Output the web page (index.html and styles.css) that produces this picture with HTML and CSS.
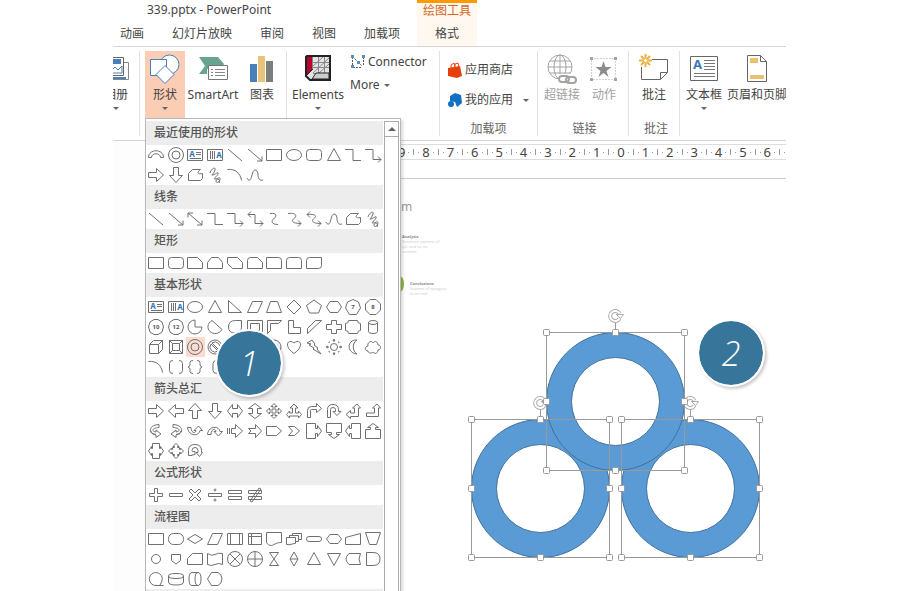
FILE: index.html
```html
<!DOCTYPE html>
<html lang="zh-CN">
<head>
    <meta charset="UTF-8">
    <meta name="viewport" content="width=device-width, initial-scale=1.0">
    <title>339.pptx - PowerPoint</title>
    <link rel="stylesheet" href="styles.css">
</head>
<body>
    <div class="app-window">
        <header class="title-bar">
            <div class="title-main">
                <h1>339.pptx - PowerPoint</h1>
                <nav class="tabs">
                    <button type="button">动画</button>
                    <button type="button">幻灯片放映</button>
                    <button type="button">审阅</button>
                    <button type="button">视图</button>
                    <button type="button">加载项</button>
                </nav>
            </div>
            <div class="context-tab">
                <span>绘图工具</span>
                <button type="button">格式</button>
            </div>
        </header>

        <section class="ribbon">
            <div class="group group-album">
                <div class="items">
                    <button type="button" class="tool">
                        <svg width="30" height="30" viewBox="0 0 30 30">
                            <path d="M9 8.500h18.500v17H9" fill="#fff" stroke="#888"/>
                            <path d="M6 3.500h16.500v18H6" fill="#fff" stroke="#666"/>
                            <path d="M8 5h12v5H8z" fill="#4a80b8"/>
                            <path d="M8 19l6-6 3 3 4-4v7z" fill="#fff" stroke="#4a80b8"/>
                            <path d="M9 24h16" stroke="#4a80b8" stroke-width="2"/>
                        </svg>
                        <span>相册</span>
                        <i class="caret"></i>
                    </button>
                </div>
            </div>

            <div class="group group-shapes">
                <div class="items">
                    <button type="button" class="tool active">
                        <svg width="30" height="30" viewBox="0 0 30 30">
                            <g fill="#fff" stroke="#4a80b8">
                                <circle cx="19.500" cy="10.500" r="9.500"/>
                                <path d="M.5 5.500h16v16H.5z"/>
                                <path d="M15 11.500l9 9-9 9-9-9z"/>
                            </g>
                        </svg>
                        <span>形状</span>
                        <i class="caret"></i>
                    </button>
                    <button type="button" class="tool wide">
                        <svg width="30" height="30" viewBox="0 0 30 30">
                            <path d="M1 3h19l6 7-3 5H9v5H1l6-8z" fill="#68a490"/>
                            <path d="M10.500 11.500h19v14h-19z" fill="#fff" stroke="#777"/>
                            <path d="M13 15.500h2m2 0h10M13 18.500h2m2 0h10M13 21.500h2m2 0h10" stroke="#888"/>
                        </svg>
                        <span>SmartArt</span>
                    </button>
                    <button type="button" class="tool">
                        <svg width="30" height="30" viewBox="0 0 30 30">
                            <path d="M3 10h7v18H3z" fill="#4a80b8"/>
                            <path d="M11 2h7v26h-7z" fill="#e9c27b"/>
                            <path d="M19 7h7v21h-7z" fill="#7a7e7b"/>
                        </svg>
                        <span>图表</span>
                    </button>
                </div>
            </div>

            <div class="group group-elements">
                <div class="items">
                    <button type="button" class="tool wide">
                        <svg width="30" height="30" viewBox="0 0 30 30">
                            <path d="M4 2h23v24H7l-4-4V3z" fill="#e4e4e4" stroke="#222" stroke-width="2"/>
                            <path d="M4 3h5v13l-5 5z" fill="#b8002f"/>
                            <path d="M9.500 3v13M15.500 3v16M21.500 3v16M9 8.500h17M9 13.500h17M10 19.500h16M9 13l11-10M10 19l16-15M16 19l10-9" fill="none" stroke="#888"/>
                            <path d="M9 25l4-6h13v6z" fill="#ccc" stroke="#222"/>
                            <path d="M4 21l6-6" stroke="#222"/>
                        </svg>
                        <span>Elements</span>
                        <i class="caret"></i>
                    </button>
                    <div class="stack latin">
                        <button type="button">
                            <svg width="16" height="16" viewBox="0 0 16 16">
                                <path d="M2.500 3v9M3 13.500h9M13.500 3v9M3 3l9 9" fill="none" stroke="#555" stroke-dasharray="2 1"/>
                                <path d="M1 1h3v3H1zM12 1h3v3h-3zM1 11h3v3H1zM7 7h3v3H7z" fill="#5b8fc0"/>
                            </svg>
                            Connector
                        </button>
                        <button type="button">More <i class="caret"></i></button>
                    </div>
                </div>
            </div>

            <div class="group group-addins">
                <div class="items">
                    <div class="stack">
                        <button type="button">
                            <svg width="16" height="16" viewBox="0 0 16 16">
                                <path d="M1 6l12-2 2 10-5 2-9-2z" fill="#e8400c"/>
                                <path d="M4 6V3l3-2 1 4V2l3-1 1 4" fill="none" stroke="#e8400c"/>
                            </svg>
                            应用商店
                        </button>
                        <button type="button">
                            <svg width="16" height="16" viewBox="0 0 16 16">
                                <path d="M3 4l5-3 6 2 1 8-5 4-2-5-5-1z" fill="#0f70c4"/>
                                <circle cx="4" cy="12" r="3" fill="#0f70c4"/>
                            </svg>
                            我的应用
                            <i class="caret"></i>
                        </button>
                    </div>
                </div>
                <div class="group-label">加载项</div>
            </div>

            <div class="group group-links">
                <div class="items">
                    <button type="button" class="tool" disabled>
                        <svg width="30" height="30" viewBox="0 0 30 30">
                            <g fill="none" stroke="#a3a3a3">
                                <circle cx="13" cy="13" r="12"/>
                                <ellipse cx="13" cy="13" rx="6" ry="12"/>
                                <path d="M13 1v24M1 13h24M3 7h20M3 19h20"/>
                            </g>
                            <path d="M11 20h19v10H11z" fill="#fff"/>
                            <g fill="none" stroke="#a3a3a3" stroke-width="2">
                                <rect x="12" y="22" width="10" height="6" rx="3"/>
                                <rect x="19" y="23" width="10" height="6" rx="3"/>
                            </g>
                        </svg>
                        <span>超链接</span>
                    </button>
                    <button type="button" class="tool" disabled>
                        <svg width="30" height="30" viewBox="0 0 30 30">
                            <path d="M2.500 4.500h24v21h-24z" fill="none" stroke="#a3a3a3" stroke-dasharray="1 2"/>
                            <path d="M1 3h3v3H1zM25 3h3v3h-3zM1 24h3v3H1zM25 24h3v3h-3z" fill="#a3a3a3"/>
                            <path d="M14.500 7l2 6h6l-5 4 2 6-5-4-5 4 2-6-5-4h6z" fill="#8c8c8c"/>
                        </svg>
                        <span>动作</span>
                    </button>
                </div>
                <div class="group-label">链接</div>
            </div>

            <div class="group group-comments">
                <div class="items">
                    <button type="button" class="tool">
                        <svg width="30" height="30" viewBox="0 0 30 30">
                            <path d="M2.500 13v12.500h19l7-7v-13H13" fill="none" stroke="#666"/>
                            <path d="M21.500 25.500v-7h7" fill="none" stroke="#666"/>
                            <path d="M6.500 0v4m0 5v4M0 6.500h4m5 0h4M2 2l3 3m3 3l3 3m0-9L8 5M5 8l-3 3" stroke="#ecb23f" stroke-width="2"/>
                            <circle cx="6.500" cy="6.500" r="2" fill="#fff" stroke="#ecb23f"/>
                        </svg>
                        <span>批注</span>
                    </button>
                </div>
                <div class="group-label">批注</div>
            </div>

            <div class="group group-text">
                <div class="items">
                    <button type="button" class="tool">
                        <svg width="30" height="30" viewBox="0 0 30 30">
                            <path d="M1.500 2.500h27v24h-27z" fill="#fff" stroke="#666"/>
                            <text x="4" y="15" class="glyph-letter">A</text>
                            <path d="M15 6.500h11M15 9.500h11M15 12.500h11M15 15.500h11M5 19.500h21M5 22.500h21" stroke="#777"/>
                        </svg>
                        <span>文本框</span>
                        <i class="caret"></i>
                    </button>
                    <button type="button" class="tool header-footer">
                        <svg width="30" height="30" viewBox="0 0 30 30">
                            <path d="M5.500 1.500h13l6 6v20h-19z" fill="#fff" stroke="#666"/>
                            <path d="M18.500 1.500v6h6" fill="none" stroke="#666"/>
                            <path d="M8 4h8v5H8zM8 21h14v4H8z" fill="#ecc06f"/>
                        </svg>
                        <span>页眉和页脚</span>
                    </button>
                </div>
            </div>
        </section>

        <div class="ruler">
            <span>9</span><i></i><span>8</span><i></i><span>7</span><i></i><span>6</span><i></i>
            <span>5</span><i></i><span>4</span><i></i><span>3</span><i></i><span>2</span><i></i>
            <span>1</span><i></i><span>0</span><i></i><span>1</span><i></i><span>2</span><i></i>
            <span>3</span><i></i><span>4</span><i></i><span>5</span><i></i><span>6</span><i></i>
        </div>

        <main class="workspace">
            <div class="thumbnails"></div>
            <div class="slide">
                <p class="slide-title">m</p>
                <div class="slide-note note-analysis">
                    <b>Analysis</b>
                    <p>Sentence pattern of<br>tpl. and so on<br>content</p>
                </div>
                <div class="slide-note note-conclusions">
                    <b>Conclusions</b>
                    <p>Subtext of category<br>in an text</p>
                </div>
                <span class="slide-dot"></span>

                <svg class="drawing" width="300" height="262" viewBox="465 300 300 262">
                    <defs>
                        <path id="ring" fill-rule="evenodd" d="M-69 0a69 69 0 1 1 138 0a69 69 0 1 1-138 0zM-44 0a44 44 0 1 0 88 0a44 44 0 1 0-88 0z"/>
                        <g id="selection">
                            <path d="M-69-69H69V69H-69zM0-69V-81" fill="none" stroke="#999"/>
                            <g fill="#fff" stroke="#999">
                                <rect x="-72" y="-72" width="6" height="6" rx="1"/>
                                <rect x="-3" y="-72" width="6" height="6" rx="1"/>
                                <rect x="66" y="-72" width="6" height="6" rx="1"/>
                                <rect x="-72" y="-3" width="6" height="6" rx="1"/>
                                <rect x="66" y="-3" width="6" height="6" rx="1"/>
                                <rect x="-72" y="66" width="6" height="6" rx="1"/>
                                <rect x="-3" y="66" width="6" height="6" rx="1"/>
                                <rect x="66" y="66" width="6" height="6" rx="1"/>
                            </g>
                            <path d="M4-83A5 5 0 1 1 4-88" fill="none" stroke="#aaa" stroke-width="4"/>
                            <path d="M4-83A5 5 0 1 1 4-88" fill="none" stroke="#fff" stroke-width="2"/>
                            <path d="M1-87h7l-3 4z" fill="#fff" stroke="#aaa"/>
                        </g>
                    </defs>
                    <g fill="#5b9bd5" stroke="#41719c">
                        <use href="#ring" x="540.500" y="488.500"/>
                        <use href="#ring" x="690.500" y="488.500"/>
                        <use href="#ring" x="615.500" y="401.500"/>
                    </g>
                    <use href="#selection" x="540.500" y="488.500"/>
                    <use href="#selection" x="690.500" y="488.500"/>
                    <use href="#selection" x="615.500" y="401.500"/>
                </svg>
            </div>
        </main>

        <div class="shape-menu">
            <div class="gallery" id="gallery"></div>
            <div class="scrollbar">
                <button type="button" aria-label="向上滚动"></button>
            </div>
        </div>

        <span class="step step-one">1</span>
        <span class="step step-two">2</span>
    </div>

    <script src="gallery.js"></script>
</body>
</html>
```

FILE: styles.css
```css
/* General Styles */
* {
    box-sizing: border-box;
}

body {
    margin: 0;
    background: #fff;
    color: #444;
    font-family: "Noto Sans", "Noto Sans CJK SC", sans-serif;
    font-size: 12px;
    line-height: 16px;
}

button {
    margin: 0;
    padding: 0;
    border: none;
    background: none;
    color: inherit;
    font: inherit;
    white-space: nowrap;
}

h1, h2, p {
    margin: 0;
    font-weight: normal;
}

.app-window {
    position: relative;
    display: flex;
    flex-direction: column;
    height: 100vh;
    margin: 0 114px 0 113px;
    overflow: hidden;
}

/* Title and tabs */
.title-bar {
    display: flex;
    height: 47px;
    border-bottom: 1px solid #d4d4d4;
}

.title-main {
    width: 304px;
}

.title-main h1 {
    padding: 2px 0 0 34px;
    font-size: 12px;
    line-height: 16px;
}

.tabs {
    display: flex;
    gap: 28px;
    padding: 8px 0 0 7px;
}

.context-tab {
    display: flex;
    flex-direction: column;
    align-items: center;
    gap: 7px;
    width: 60px;
    border-top: 3px solid #f90;
    background: #fef8f0;
}

.context-tab span {
    color: #d2691e;
}

/* Ribbon */
.ribbon {
    display: flex;
    height: 94px;
    padding: 4px 0;
    border-bottom: 1px solid #d4d4d4;
}

.group {
    display: flex;
    flex: none;
    flex-direction: column;
    justify-content: space-between;
    border-right: 1px solid #e1e1e1;
}

.items {
    display: flex;
}

.group-label {
    color: #666;
    text-align: center;
    line-height: 14px;
}

.group-album {
    width: 27px;
    overflow: hidden;
}

.group-album .items {
    justify-content: flex-end;
    padding-right: 2px;
}

.group-shapes {
    width: 147px;
    padding-left: 5px;
}

.group-elements {
    width: 153px;
    padding-left: 3px;
}

.group-addins {
    width: 98px;
}

.group-links {
    width: 91px;
    padding-left: 3px;
}

.group-comments {
    width: 51px;
    padding-left: 4px;
}

.group-text {
    flex: 1;
    min-width: 0;
    padding-left: 3px;
    border-right: none;
    overflow: hidden;
}

.tool {
    display: flex;
    flex: none;
    flex-direction: column;
    align-items: center;
    width: 42px;
    height: 67px;
    padding-top: 3px;
}

.tool span {
    margin-top: 3px;
}

.tool .caret {
    margin-top: 4px;
}

.tool.wide {
    width: 56px;
}

.tool.active {
    width: 40px;
    background: #fccdb5;
}

.tool.header-footer {
    width: 64px;
}

.tool:disabled {
    color: #a0a0a0;
}

.caret {
    display: inline-block;
    border: 3px solid transparent;
    border-top-color: #666;
    border-bottom: none;
}

.stack {
    display: flex;
    flex-direction: column;
    gap: 14px;
    padding: 11px 0 0 7px;
}

.stack button {
    display: flex;
    align-items: center;
    gap: 2px;
}

.stack .caret {
    margin-left: 8px;
}

.stack.latin {
    gap: 7px;
    padding: 3px 0 0 4px;
}

.stack.latin .caret {
    margin-left: 2px;
}

.glyph-letter {
    fill: #3a78b8;
    font-size: 13px;
    font-weight: bold;
}

/* Ruler */
.ruler {
    display: flex;
    align-items: center;
    height: 16px;
    margin-top: 3px;
    padding-left: 283px;
    border-top: 1px solid #ddd;
    border-bottom: 1px solid #ddd;
    font-size: 13px;
    line-height: 14px;
}

.ruler span {
    flex: 1;
    text-align: center;
}

.ruler i {
    flex: none;
    width: 13px;
    height: 6px;
    background:
        linear-gradient(#999, #999) 6px 0 / 1px 6px no-repeat,
        linear-gradient(#999, #999) 1px 3px / 1px 1px no-repeat,
        linear-gradient(#999, #999) 11px 3px / 1px 1px no-repeat;
}

/* Workspace */
.workspace {
    display: flex;
    flex: 1;
    margin-top: 18px;
}

.thumbnails {
    width: 32px;
    margin-top: -37px;
    background: #fdfdfd;
}

.slide {
    position: relative;
    flex: 1;
    border-top: 1px solid #ccc;
}

.slide-title {
    position: absolute;
    top: 20px;
    left: 256px;
    color: #999;
}

.slide-note {
    position: absolute;
    color: #ccc;
    font-size: 4px;
    line-height: 5px;
}

.slide-note b {
    color: #888;
}

.note-analysis {
    top: 55px;
    left: 257px;
}

.note-conclusions {
    top: 102px;
    left: 265px;
}

.slide-dot {
    position: absolute;
    top: 97px;
    left: 250px;
    width: 9px;
    height: 16px;
    border-radius: 50%;
    background: #8db844;
}

.drawing {
    position: absolute;
    top: 121px;
    left: 320px;
}

/* Shape menu */
.shape-menu {
    position: absolute;
    top: 118px;
    bottom: 0;
    left: 32px;
    display: flex;
    width: 256px;
    padding: 2px 1px 0 0;
    border: 1px solid #b8b8b8;
    border-bottom: none;
    background: #fff;
    box-shadow: 2px 2px 3px rgba(0, 0, 0, 0.15);
    overflow: hidden;
}

.gallery {
    flex: 1;
}

.gallery::after {
    content: "";
    display: block;
    height: 24px;
    background: #ededed;
}

.gallery h2 {
    height: 24px;
    padding-left: 8px;
    background: #ededed;
    color: #555;
    font-size: 12px;
    font-weight: 500;
    line-height: 24px;
}

.shape-grid {
    display: grid;
    grid-template-columns: repeat(12, 1fr);
}

.shape-grid button {
    display: flex;
    align-items: center;
    justify-content: center;
    height: 20px;
}

.shape-grid .selected {
    background: #fcdcd0;
}

.shape-grid svg {
    fill: none;
    stroke: #707070;
}

.shape-grid text {
    fill: #555;
    stroke: none;
    font-size: 6px;
    font-weight: bold;
    text-anchor: middle;
}

.shape-grid .blue {
    fill: #2e75b6;
    font-size: 8px;
}

.scrollbar {
    width: 15px;
    margin-left: 1px;
    border: 1px solid #aaa;
    border-bottom: none;
}

.scrollbar button {
    display: flex;
    align-items: center;
    justify-content: center;
    width: 100%;
    height: 15px;
    border-bottom: 1px solid #aaa;
}

.scrollbar button::before {
    content: "";
    border: 4px solid transparent;
    border-top: none;
    border-bottom-color: #666;
}

/* Step badges */
.step {
    position: absolute;
    width: 68px;
    height: 68px;
    border: 2px solid #fff;
    border-radius: 50%;
    background: #37759b padding-box;
    box-shadow: 2px 2px 3px rgba(0, 0, 0, 0.2);
    color: #fff;
    font-family: "Open Sans", sans-serif;
    font-size: 34px;
    font-style: italic;
    font-weight: 300;
    line-height: 64px;
    text-align: center;
}

.step-one {
    top: 329px;
    left: 102px;
}

.step-two {
    top: 319px;
    left: 584px;
}
```

FILE: gallery.js
```js
const path = (d) => `<path d="${d}"/>`;

// every icon is drawn on an 18 x 18 grid
const icons = {
    // lines
    line: path("M2 3l14 12"),
    arrow: path("M2 3l14 12M16 10.500V15h-5"),
    doubleArrow: path("M2 3l14 12M16 10.500V15h-5M2 7.500V3h5"),
    elbow: path("M1 3.500h8v11h8"),
    elbowArrow: path("M1 3.500h8v10h8M14 10.500l3 3-3 3"),
    elbowDouble: path("M2 4.500h7v9h8M14 10.500l3 3-3 3M5 1.500l-3 3 3 3"),
    curveLine: path("M5 3.500c7-1 7 3 4 5s-3 6 4 6"),
    curveArrow: path("M3 3.500c9-1 9 3 6 5s-2 5 7 5M13 10.500l3 3-3 3"),
    curveDouble: path("M2 4.500c9-1 10 2 7 4s-2 5 7 5M13 10.500l3 3-3 3M5 1.500l-3 3 3 3"),
    curve: path("M1 12c2 4 4 2 5-3 1-6 5-7 6-1 0 5 2 7 5 6"),
    freeform: path("M2.500 14.500v-7l4-4h8c-4 3-3 5 2 4v5l-2 2z"),
    scribble: path("M4 7c1-4 6-7 5-3s-5 6-2 5 6-4 5-1-6 5-3 5 5-3 5 0-4 5-4 2 5-2 3 2"),
    arc: path("M1.500 3.500c8-1 13 4 14 11"),

    // rectangles
    rect: path("M1.500 3.500h15v11h-15z"),
    roundRect: '<rect x="1.500" y="3.500" width="15" height="11" rx="3"/>',
    snipOne: path("M1.500 3.500h10l5 5v6h-15z"),
    snipTwo: path("M1.500 14.500v-6l4-5h7l4 5v6z"),
    snipDiagonal: path("M1.500 3.500h10l5 5v6h-10l-5-5z"),
    snipRound: path("M1.500 14.500v-8q0-3 3-3h7l5 5v6z"),
    roundOne: path("M1.500 3.500h12q3 0 3 3v8h-15z"),
    roundTwo: path("M1.500 14.500v-8q0-3 3-3h9q3 0 3 3v8z"),
    roundDiagonal: path("M4.500 3.500h12v8q0 3-3 3h-12v-8q0-3 3-3z"),

    // basic shapes
    textBox: path("M1.500 3.500h15v11h-15zM10 6.500h5M10 8.500h5M4 12.500h11") + '<text class="blue" x="6" y="11">A</text>',
    textBoxVertical: path("M1.500 3.500h15v11h-15zM4.500 5v8M6.500 5v8M8.500 5v8") + '<text class="blue" x="13" y="12">A</text>',
    oval: '<ellipse cx="9" cy="9" rx="7.500" ry="5.500"/>',
    triangle: path("M9 2.500l6.500 12h-13z"),
    rightTriangle: path("M2.500 2.500l13 12h-13z"),
    parallelogram: path("M6.500 3.500h10l-5 11h-10z"),
    trapezoid: path("M5.500 3.500h7l4 11h-15z"),
    diamond: path("M9 2l7 7-7 7-7-7z"),
    pentagon: path("M9 2l7.500 5.500-3 7.500h-9l-3-7.500z"),
    hexagon: path("M5 3.500h8l3.500 5.500-3.500 5.500H5L1.500 9z"),
    heptagon: path("M9 1.500l5.500 2.500 2 6-4 6.500h-7l-4-6.500 2-6z") + '<text x="9" y="11">7</text>',
    octagon: path("M6 1.500h6L16.500 6v6L12 16.500H6L1.500 12V6z") + '<text x="9" y="11">8</text>',
    decagon: path("M7 1.500h4l4 2.500 1.500 5-1.500 5-4 2.500H7L3 14 1.500 9 3 4z") + '<text x="9" y="11">10</text>',
    dodecagon: path("M7 1.500h4l4 2.500 1.500 5-1.500 5-4 2.500H7L3 14 1.500 9 3 4z") + '<text x="9" y="11">12</text>',
    pie: path("M9 2a7 7 0 1 0 7 7H9z"),
    chord: path("M6 2.500l10 9c-3 5-9 5-12 2s-3-8 2-11z"),
    teardrop: path("M2.500 9q0-6.500 7-6.500h6V9q0 6-6.500 6T2.500 9z"),
    frame: path("M1.500 2.500h15v13h-15zM4.500 5.500h9v7h-9z"),
    halfFrame: path("M2.500 2.500h14l-3 3h-8v7l-3 3z"),
    lShape: path("M3.500 2.500h5v7h7v6h-12z"),
    stripe: path("M2.500 10.500l8-8h6l-14 13z"),
    cross: path("M6.500 2.500h5v4h5v5h-5v4h-5v-4h-5v-5h5z"),
    plaque: path("M4.500 2.500h9q0 3 3 3v7q-3 0-3 3h-9q0-3-3-3v-7q3 0 3-3z"),
    can: path("M4.500 4.500v9q0 2 4.500 2t4.500-2v-9q0-2-4.500-2t-4.500 2q0 2 4.500 2t4.500-2"),
    cube: path("M2.500 6.500h9v9h-9zM2.500 6.500l4-4h9v9l-4 4M11.500 6.500l4-4"),
    bevel: path("M2.500 2.500h13v13h-13zM5.500 5.500h7v7h-7zM2.500 2.500l3 3M15.500 2.500l-3 3M2.500 15.500l3-3M15.500 15.500l-3-3"),
    donut: '<circle cx="9" cy="9" r="7.500"/><circle cx="9" cy="9" r="4"/>',
    noSymbol: '<circle cx="9" cy="9" r="7"/>' + path("M6 5a5 5 0 0 1 7 7zM5 6a5 5 0 0 0 7 7z"),
    blockArc: path("M1.500 11.500c0-9 15-9 15 0h-3c0-5-9-5-9 0z"),
    folded: path("M2.500 2.500h13v9l-4 4h-9zM11.500 15.500v-4h4"),
    smiley: '<circle cx="9" cy="9" r="7"/>' + path("M5 11q4 4 8 0M6 6v1M12 6v1"),
    heart: path("M9 15.500C-2 8 3 0 9 5c6-5 11 3 0 10.500z"),
    bolt: path("M2 5l5-3 3 4-1 1 4 3-1 1 4 5-8-5 1-1-5-3 2-1z"),
    sun: '<circle cx="9" cy="9" r="3.500"/>' + path("M8 3l1-2 1 2zM8 15l1 2 1-2zM3 8L1 9l2 1zM15 8l2 1-2 1zM4 5V4h1M13 4h1v1M4 13v1h1M14 13v1h-1"),
    moon: path("M13 2C3 1 2 15 13 16 8 13 8 5 13 2z"),
    cloud: path("M4 13c-4 0-3-5 0-5-1-4 4-6 5-3 2-3 5-1 5 2 4 0 3 5 0 5 0 4-4 4-5 2-2 2-5 1-5-1z"),
    brackets: path("M6 2.500q-3.500 0-3.500 3v7q0 3 3.500 3M12 2.500q3.500 0 3.500 3v7q0 3-3.500 3"),
    braces: path("M7 2.500q-3 0-3 2v2q0 2-2 2.500q2 .5 2 2.500v2q0 2 3 2M11 2.500q3 0 3 2v2q0 2 2 2.500q-2 .5-2 2.500v2q0 2-3 2"),
    bracket: path("M11 2.500q-4 0-4 3v7q0 3 4 3"),

    // block arrows
    right: path("M1.500 6.500h8v-4L16.500 9l-7 6.500v-4h-8z"),
    left: path("M16.500 6.500h-8v-4L1.500 9l7 6.500v-4h8z"),
    up: path("M6.500 16.500v-8h-4L9 1.500l6.500 7h-4v8z"),
    down: path("M6.500 1.500v8h-4L9 16.500l6.500-7h-4v-8z"),
    leftRight: path("M1.500 9L6.500 2.500v4h5v-4L16.500 9l-5 6.500v-4h-5v4z"),
    upDown: path("M9 1.500l6.500 5h-4v5h4L9 16.500l-6.500-5h4v-5h-4z"),
    quad: path("M9 1.500l3 3h-2v3.500h3.500V6l3 3-3 3v-2H10v3.500h2l-3 3-3-3h2V10H4.500v2l-3-3 3-3v2H8V4.500H6z"),
    leftRightUp: path("M9 2l4 4h-2.500v5h3v-2l3 3.500-3 3.500v-2h-9v2l-3-3.500 3-3.500v2h3V6H5z"),
    bent: path("M2.500 15.500v-7q0-4 4-4h5v-3l5 5-5 4v-3h-5q-1 0-1 1v7z"),
    uTurn: path("M2.500 15.500v-8q0-5 5.500-5t5.500 5v2h2.500l-4 4-4-4h2.500v-2q0-2-2.500-2t-2.500 2v8z"),
    leftUp: path("M13 2l3.500 4h-2v8.500h-8v2L2 12.500l4.500-4v2.500h4V6h-2z"),
    bentUp: path("M13 2l3.500 4h-2v8.500h-12v-3.500h8V6h-2z"),
    curvedRight: path("M12 2.500C1 3 1 12 9 13v2.500l5-3.500-5-4v2C4 9 5 6 12 5.500zM3.500 8.500q1 4 5.500 4"),
    curvedLeft: path("M6 2.500C17 3 17 12 9 13v2.500L4 12l5-4v2c5-1 4-4-3-4.500zM14.500 8.500q-1 4-5.500 4"),
    curvedUp: path("M1.500 5.500C2 14 13 15 14 8.500h2.500L12.500 4 8 8.500h2c-1 4-5 2-5-3z"),
    curvedDown: path("M1.500 12.500C2 4 13 3 14 9.500h2.500L12.500 14 8 9.500h2c-1-4-5-2-5 3z"),
    striped: path("M1.500 6v6M3.500 6v6M5.500 6.500h4v-4L16.500 9l-7 6.500v-4h-4z"),
    notched: path("M2.500 6.500h7v-4l6 6.500-6 6.500v-4h-7L5 9z"),
    homePlate: path("M1.500 4.500h10L16.500 9l-5 4.500h-10z"),
    chevron: path("M3.500 4.500h6l5 4.500-5 4.500h-6l4-4.500z"),
    calloutRight: path("M1.500 1.500h9v5h2v-3L16.500 9l-4 5.500v-3h-2v5h-9z"),
    calloutDown: path("M1.500 1.500h15v9h-5v2h3L9 16.500l-5.500-4h3v-2h-5z"),
    calloutLeft: path("M16.500 1.500h-9v5h-2v-3L1.500 9l4 5.500v-3h2v5h9z"),
    calloutUp: path("M1.500 16.500h15v-9h-5v-2h3L9 1.500l-5.500 4h3v2h-5z"),
    calloutSides: path("M5.500 1.500h7v5h1v-2L16.500 9l-3 4.500v-2h-1v5h-7v-5h-1v2L1.500 9l3-4.500v2h1z"),
    calloutQuad: path("M9 1.500l3 3h-1.500v1h2v2h1V6l3 3-3 3v-1.500h-1v2h-2v1H12l-3 3-3-3h1.500v-1h-2v-2h-1V12l-3-3 3-3v1.500h1v-2h2v-1H6z"),
    circular: path("M2.500 13.500v-5q0-6 6.500-6t6.500 6v2h1l-3 4-3.500-4h2v-2q0-3-3-3t-3 3q0 2 3 1v3q-3 1-3 0v1z"),

    // equation shapes
    plus: path("M7.500 2.500h3v5h5v3h-5v5h-3v-5h-5v-3h5z"),
    minus: path("M2.500 7.500h13v3h-13z"),
    multiply: path("M5 3l4 4 4-4 2 2-4 4 4 4-2 2-4-4-4 4-2-2 4-4-4-4z"),
    divide: path("M2.500 7.500h13v3h-13z") + '<circle cx="9" cy="4" r="1"/><circle cx="9" cy="14" r="1"/>',
    equal: path("M2.500 4.500h13v3h-13zM2.500 10.500h13v3h-13z"),
    notEqual: path("M2.500 4.500h13v3h-13zM2.500 10.500h13v3h-13zM13 2l2 1-9 13-2-1z"),

    // flowchart
    alternate: '<rect x="1.500" y="3.500" width="15" height="11" rx="5"/>',
    decision: path("M9 4.500L16.500 9 9 13.500 1.500 9z"),
    predefined: path("M1.500 3.500h15v11h-15zM4.500 3.500v11M13.500 3.500v11"),
    internal: path("M2.500 3.500h13v11h-13zM5.500 3.500v11M2.500 6.500h13"),
    document: path("M1.500 2.500h15v10c-6 0-8 3-10 3s-4-1-5-3z"),
    documents: path("M1.500 7.500h9v6c-4 0-5 2-9 1zM4.500 7.500v-2h9v6h-3M7.500 5.500v-2h9v6h-3"),
    terminator: '<rect x="1.500" y="6.500" width="15" height="5" rx="2.500"/>',
    preparation: path("M5 4.500h8L16.500 9 13 13.500H5L1.500 9z"),
    manualInput: path("M1.500 7.500l15-4v11h-15z"),
    manualOperation: path("M1.500 2.500h15l-4 12h-7z"),
    connector: '<circle cx="9" cy="9" r="4.500"/>',
    offPage: path("M4.500 4.500h9v6L9 14l-4.500-3.500z"),
    card: path("M1.500 8.500l5-5h10v11h-15z"),
    tape: path("M1.500 3.500q4 3 7.500 1t7.500-1v11q-4-2-7.500 0t-7.500 0z"),
    summing: '<circle cx="9" cy="9" r="7.500"/>' + path("M4 4l10 10M14 4L4 14"),
    or: '<circle cx="9" cy="9" r="7.500"/>' + path("M9 1.500v15M1.500 9h15"),
    collate: path("M4.500 2.500h9l-9 13h9z"),
    sort: path("M9 2l4 7-4 7-4-7zM5 9h8"),
    extract: path("M9 2.500l6.500 12h-13z"),
    merge: path("M9 15.500l6.500-12h-13z"),
    storedData: path("M5 3.500h11.500q-3 5.500 0 11H5q-6-5.500 0-11z"),
    delay: path("M2.500 2.500H9q7 0 7 6.500t-7 6.500H2.500z"),
    sequential: path("M16.500 15.500H9A6.500 6.500 0 1 1 15 11l-2 4"),
    disk: path("M1.500 6v6q0 3 7.500 3t7.500-3V6q0-2.500-7.500-2.500T1.500 6q0 2.500 7.500 2.500T16.500 6"),
    directAccess: path("M6 2.500h6q3 0 3 6.500t-3 6.500H6q-3 0-3-6.500t3-6.500zM12 2.500q-3 0-3 6.500t3 6.500"),
    display: path("M5.500 2.500H12q4 2 4 6.500t-4 6.500H5.500L1.500 9z")
};

const sections = [
    ["最近使用的形状", "blockArc donut textBox textBoxVertical line arrow rect oval roundRect triangle elbow elbowArrow right down freeform scribble arc curve"],
    ["线条", "line arrow doubleArrow elbow elbowArrow elbowDouble curveLine curveArrow curveDouble curve freeform scribble"],
    ["矩形", "rect roundRect snipOne snipTwo snipDiagonal snipRound roundOne roundTwo roundDiagonal"],
    ["基本形状", "textBox textBoxVertical oval triangle rightTriangle parallelogram trapezoid diamond pentagon hexagon heptagon octagon decagon dodecagon pie chord teardrop frame halfFrame lShape stripe cross plaque can cube bevel donut noSymbol blockArc folded smiley heart bolt sun moon cloud arc brackets braces bracket"],
    ["箭头总汇", "right left up down leftRight upDown quad leftRightUp bent uTurn leftUp bentUp curvedRight curvedLeft curvedUp curvedDown striped notched homePlate chevron calloutRight calloutDown calloutLeft calloutUp calloutSides calloutQuad circular"],
    ["公式形状", "plus minus multiply divide equal notEqual"],
    ["流程图", "rect alternate decision parallelogram predefined internal document documents terminator preparation manualInput manualOperation connector offPage card tape summing or collate sort extract merge storedData delay sequential disk directAccess display"]
];

const gallery = document.getElementById("gallery");

sections.forEach(([title, names]) => {
    const buttons = names.split(" ").map((name) => {
        const selected = title === "基本形状" && name === "donut" ? ' class="selected"' : "";
        return `<button type="button" aria-label="${name}"${selected}><svg width="18" height="18" viewBox="0 0 18 18">${icons[name]}</svg></button>`;
    });
    gallery.innerHTML += `<h2>${title}</h2><div class="shape-grid">${buttons.join("")}</div>`;
});
```
